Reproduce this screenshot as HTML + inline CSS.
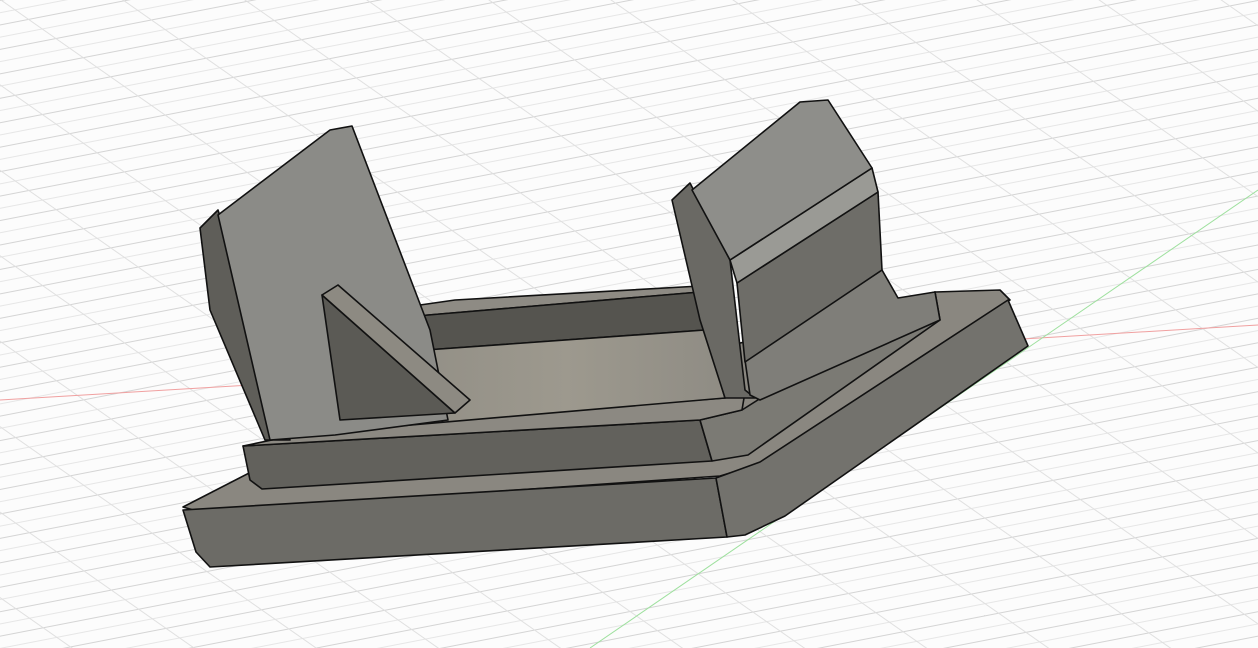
<!DOCTYPE html>
<html><head><meta charset="utf-8"><style>
html,body{margin:0;padding:0;background:#fff;}
svg{display:block;}
</style></head><body>
<svg width="1258" height="648" viewBox="0 0 1258 648" xmlns="http://www.w3.org/2000/svg">
<defs>
<pattern id="g1" width="1258" height="24" patternUnits="userSpaceOnUse" patternTransform="rotate(-11)">
<line x1="0" y1="0.5" x2="1258" y2="0.5" stroke="#d4d4d4" stroke-width="1"/>
<line x1="0" y1="12.5" x2="1258" y2="12.5" stroke="#e6e6e6" stroke-width="1"/>
</pattern>
<pattern id="g2" width="70" height="648" patternUnits="userSpaceOnUse" patternTransform="rotate(-55)">
<line x1="0.5" y1="0" x2="0.5" y2="648" stroke="#e0e0e0" stroke-width="1"/>
</pattern>
<linearGradient id="fl" x1="0" y1="0" x2="1" y2="0"><stop offset="0" stop-color="#8d8a82"/><stop offset="0.6" stop-color="#9d998e"/><stop offset="1" stop-color="#8f8c84"/></linearGradient>
</defs>
<rect width="1258" height="648" fill="#fcfcfc"/>
<rect width="1258" height="648" fill="url(#g1)"/>
<rect width="1258" height="648" fill="url(#g2)"/>
<line x1="0" y1="400" x2="1258" y2="325" stroke="#f0a0a0" stroke-width="1"/>
<line x1="590" y1="648" x2="1258" y2="190" stroke="#9ee09e" stroke-width="1"/>
<g stroke="#111" stroke-width="1.6" stroke-linejoin="round">
<polygon points="183,507 255,470 935,292 1000,290 1010,300 780,460 740,470 720,476 200,512" fill="#8a8780"/>
<polygon points="183,510 716,478 727,537 210,567 196,552" fill="#6c6b66"/>
<polygon points="716,478 760,462 1008,300 1028,346 785,516 745,535 727,537" fill="#73726d"/>
<polygon points="243,446 700,420 712,461 262,489 250,480" fill="#62615c"/>
<polygon points="700,420 742,410 915,300 935,292 940,320 748,455 712,461" fill="#7b7a74"/>
<polygon points="243,446 330,428 725,398 745,392 742,410 700,420" fill="#8c8982"/>
<!-- rim above back wall -->
<polygon points="400,322 420,305 455,300 700,286 700,292 440,314 417,316" fill="#8e8b84"/>
<polygon points="417,316 440,314 700,292 705,330 426,350" fill="#55544f"/>
<polygon points="426,350 705,330 725,398 330,432 360,418" fill="url(#fl)"/>
<polygon points="200,228 218,210 290,440 265,440 210,310" fill="#5f5e59"/>
<polygon points="218,215 330,130 352,126 430,330 448,420 335,435 270,440" fill="#8b8b87"/>
<polygon points="322,295 340,420 455,413" fill="#5b5a55"/>
<polygon points="322,295 338,285 470,400 455,413" fill="#8d8a82"/>
<polygon points="672,200 690,183 730,260 745,390 755,398 725,398 700,320" fill="#6a6964"/>
<polygon points="745,360 882,270 898,298 935,292 940,320 760,400 750,395" fill="#7f7e79"/>
<polygon points="737,283 878,192 882,270 745,362" fill="#6e6d68"/>
<polygon points="730,260 872,168 878,192 737,283" fill="#9a9a95"/>
<polygon points="692,190 800,102 828,100 872,168 730,260" fill="#8e8e8a"/>
</g>
</svg>
</body></html>
